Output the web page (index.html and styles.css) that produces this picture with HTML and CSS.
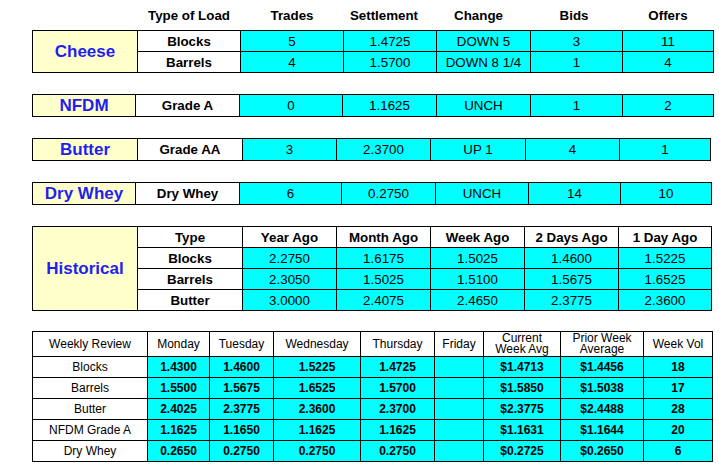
FILE: index.html
```html
<!DOCTYPE html>
<html>
<head>
<meta charset="utf-8">
<title>Dairy Market</title>
<link rel="stylesheet" href="styles.css">
</head>
<body>
<div class="page">

<table class="mkt t-cheese">
<colgroup><col class="w105"><col class="w103"><col class="w103"><col class="w93"><col class="w94"><col class="w92"><col class="w91"></colgroup>
<thead>
<tr class="head"><th></th><th>Type of Load</th><th>Trades</th><th class="sh-set">Settlement</th><th class="sh-chg">Change</th><th class="sh-bid">Bids</th><th>Offers</th></tr>
</thead>
<tbody>
<tr><td class="label" rowspan="2">Cheese</td><td class="type">Blocks</td><td class="val">5</td><td class="val">1.4725</td><td class="val">DOWN 5</td><td class="val">3</td><td class="val">11</td></tr>
<tr><td class="type">Barrels</td><td class="val">4</td><td class="val">1.5700</td><td class="val">DOWN 8 1/4</td><td class="val">1</td><td class="val">4</td></tr>
</tbody>
</table>

<table class="mkt single t-nfdm">
<colgroup><col class="w103"><col class="w104"><col class="w103"><col class="w94"><col class="w94"><col class="w92"><col class="w91"></colgroup>
<tr><td class="label">NFDM</td><td class="type">Grade A</td><td class="val">0</td><td class="val">1.1625</td><td class="val">UNCH</td><td class="val">1</td><td class="val">2</td></tr>
</table>

<table class="mkt single t-butter">
<colgroup><col class="w105"><col class="w105"><col class="w94"><col class="w94"><col class="w95"><col class="w94"><col class="w91"></colgroup>
<tr><td class="label">Butter</td><td class="type">Grade AA</td><td class="val">3</td><td class="val">2.3700</td><td class="val">UP 1</td><td class="val">4</td><td class="val">1</td></tr>
</table>

<table class="mkt single t-whey">
<colgroup><col class="w103"><col class="w104"><col class="w102"><col class="w94"><col class="w93"><col class="w92"><col class="w91"></colgroup>
<tr><td class="label">Dry Whey</td><td class="type">Dry Whey</td><td class="val">6</td><td class="val">0.2750</td><td class="val">UNCH</td><td class="val">14</td><td class="val">10</td></tr>
</table>

<table class="mkt hist t-hist">
<colgroup><col class="w105"><col class="w105"><col class="w94"><col class="w94"><col class="w94"><col class="w94"><col class="w93"></colgroup>
<tr><td class="label" rowspan="4">Historical</td><td class="type">Type</td><td class="type">Year Ago</td><td class="type">Month Ago</td><td class="type">Week Ago</td><td class="type">2 Days Ago</td><td class="type">1 Day Ago</td></tr>
<tr><td class="type">Blocks</td><td class="val">2.2750</td><td class="val">1.6175</td><td class="val">1.5025</td><td class="val">1.4600</td><td class="val">1.5225</td></tr>
<tr><td class="type">Barrels</td><td class="val">2.3050</td><td class="val">1.5025</td><td class="val">1.5100</td><td class="val">1.5675</td><td class="val">1.6525</td></tr>
<tr><td class="type">Butter</td><td class="val">3.0000</td><td class="val">2.4075</td><td class="val">2.4650</td><td class="val">2.3775</td><td class="val">2.3600</td></tr>
</table>

<table class="week">
<colgroup><col class="w115"><col class="w62"><col class="w64"><col class="w87"><col class="w74"><col class="w49"><col class="w77"><col class="w83"><col class="w69"></colgroup>
<tr class="whead"><td>Weekly Review</td><td>Monday</td><td>Tuesday</td><td>Wednesday</td><td>Thursday</td><td>Friday</td><td><span class="ln">Current</span><span class="ln">Week Avg</span></td><td><span class="ln">Prior Week</span><span class="ln">Average</span></td><td>Week Vol</td></tr>
<tr><td class="name">Blocks</td><td class="num">1.4300</td><td class="num">1.4600</td><td class="num">1.5225</td><td class="num">1.4725</td><td class="num"></td><td class="num">$1.4713</td><td class="num">$1.4456</td><td class="num">18</td></tr>
<tr><td class="name">Barrels</td><td class="num">1.5500</td><td class="num">1.5675</td><td class="num">1.6525</td><td class="num">1.5700</td><td class="num"></td><td class="num">$1.5850</td><td class="num">$1.5038</td><td class="num">17</td></tr>
<tr><td class="name">Butter</td><td class="num">2.4025</td><td class="num">2.3775</td><td class="num">2.3600</td><td class="num">2.3700</td><td class="num"></td><td class="num">$2.3775</td><td class="num">$2.4488</td><td class="num">28</td></tr>
<tr><td class="name">NFDM Grade A</td><td class="num">1.1625</td><td class="num">1.1650</td><td class="num">1.1625</td><td class="num">1.1625</td><td class="num"></td><td class="num">$1.1631</td><td class="num">$1.1644</td><td class="num">20</td></tr>
<tr><td class="name">Dry Whey</td><td class="num">0.2650</td><td class="num">0.2750</td><td class="num">0.2750</td><td class="num">0.2750</td><td class="num"></td><td class="num">$0.2725</td><td class="num">$0.2650</td><td class="num">6</td></tr>
</table>

</div>
</body>
</html>
```

FILE: styles.css
```css
html, body {
  margin: 0;
  padding: 0;
  background: #ffffff;
}

.page {
  padding: 8px 0 0 32px;
  font-family: "Liberation Sans", Arial, sans-serif;
  color: #000;
}

table {
  border-collapse: collapse;
  table-layout: fixed;
}

.mkt {
  margin-bottom: 21px;
}

.mkt.hist {
  margin-bottom: 20px;
}

.mkt td {
  border: 1px solid #000;
  padding: 0;
  height: 20px;
  line-height: 15px;
  text-align: center;
  font-size: 13.33px;
}

.mkt.single td {
  height: 21px;
}

.head th {
  border: none;
  padding: 0 0 7px;
  line-height: 15px;
  font-size: 13.33px;
  font-weight: bold;
  text-align: center;
}

.head .sh-set {
  padding-right: 12px;
}

.head .sh-chg {
  padding-right: 10px;
}

.head .sh-bid {
  padding-right: 5px;
}

.mkt .label {
  background: #ffffcc;
  color: #1f1ff0;
  font-weight: bold;
  font-size: 17px;
  line-height: 20px;
}

.type {
  background: #ffffff;
  font-weight: bold;
}

.val {
  background: #00ffff;
  font-weight: normal;
}

.week td {
  border: 1px solid #000;
  padding: 0;
  height: 20px;
  text-align: center;
  font-size: 12px;
  line-height: 14px;
}

.week .whead td {
  height: 24px;
  line-height: 12px;
  background: #fff;
}

.week .ln {
  display: block;
  height: 11px;
  line-height: 11px;
}

.week .name {
  background: #fff;
}

.week .num {
  background: #00ffff;
  font-weight: bold;
}

.w49 { width: 49px; }
.w62 { width: 62px; }
.w64 { width: 64px; }
.w69 { width: 69px; }
.w70 { width: 70px; }
.w74 { width: 74px; }
.w77 { width: 77px; }
.w83 { width: 83px; }
.w87 { width: 87px; }
.w91 { width: 91px; }
.w92 { width: 92px; }
.w93 { width: 93px; }
.w94 { width: 94px; }
.w95 { width: 95px; }
.w102 { width: 102px; }
.w103 { width: 103px; }
.w104 { width: 104px; }
.w105 { width: 105px; }
.w115 { width: 115px; }
```
